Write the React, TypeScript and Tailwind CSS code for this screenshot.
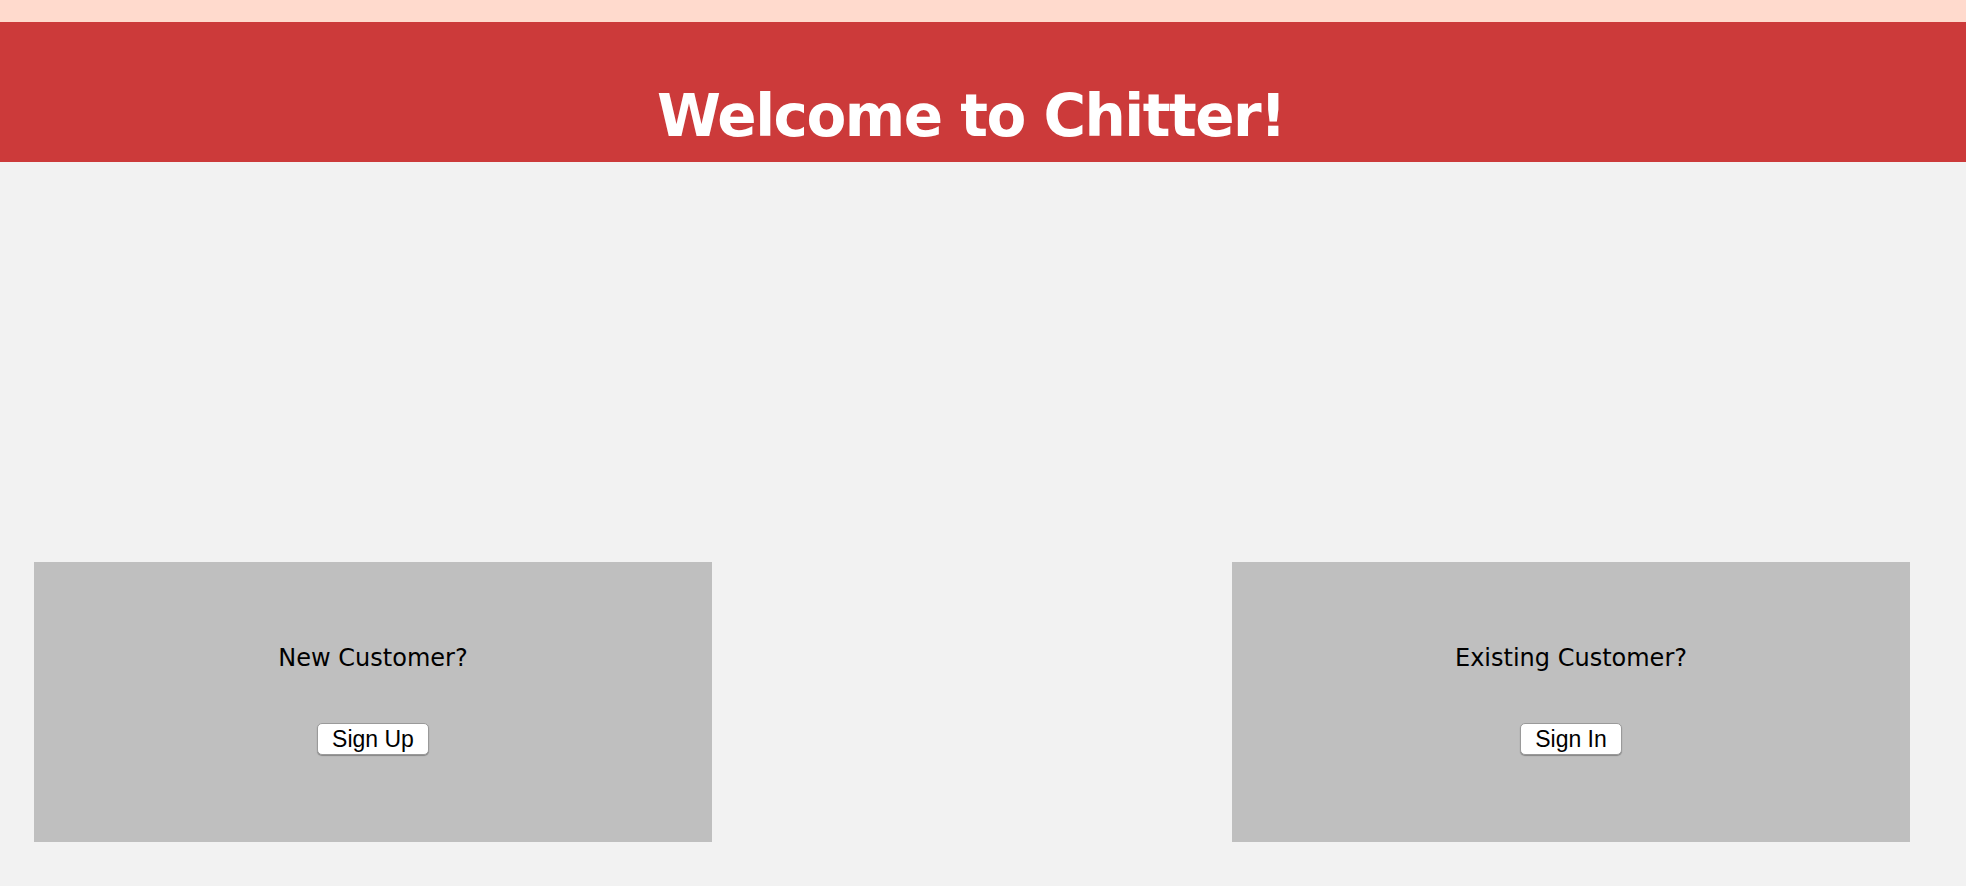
import React from "react";

function Card({ title, label }: { title: string; label: string }) {
  return (
    <div className="w-[678px] h-[280px] bg-[#bfbfbf] flex flex-col items-center">
      <p className="pt-[84px] text-[24px] leading-[24px] text-black [font-family:'DejaVu_Sans',Verdana,sans-serif]">
        {title}
      </p>
      <button className="mt-[53px] h-[32px] px-[14px] bg-white border border-[#9a9a9a] rounded-[5px] shadow-[0_1px_1px_rgba(0,0,0,0.3)] text-[23px] leading-[30px] text-black [font-family:'Liberation_Sans',Arial,sans-serif]">
        {label}
      </button>
    </div>
  );
}

export default function App() {
  return (
    <div className="min-h-screen w-full bg-[#f2f2f2]">
      <div className="h-[22px] bg-[#ffdacd]" />
      <header className="h-[140px] bg-[#cc3a3a] pr-[24px]">
        <h1 className="pt-[65px] text-center text-[58px] leading-[58px] tracking-[-1.5px] font-bold text-white [font-family:'DejaVu_Sans',Verdana,sans-serif]">
          Welcome to Chitter!
        </h1>
      </header>
      <div className="flex justify-between pl-[34px] pr-[56px] pt-[400px]">
        <Card title="New Customer?" label="Sign Up" />
        <Card title="Existing Customer?" label="Sign In" />
      </div>
    </div>
  );
}
